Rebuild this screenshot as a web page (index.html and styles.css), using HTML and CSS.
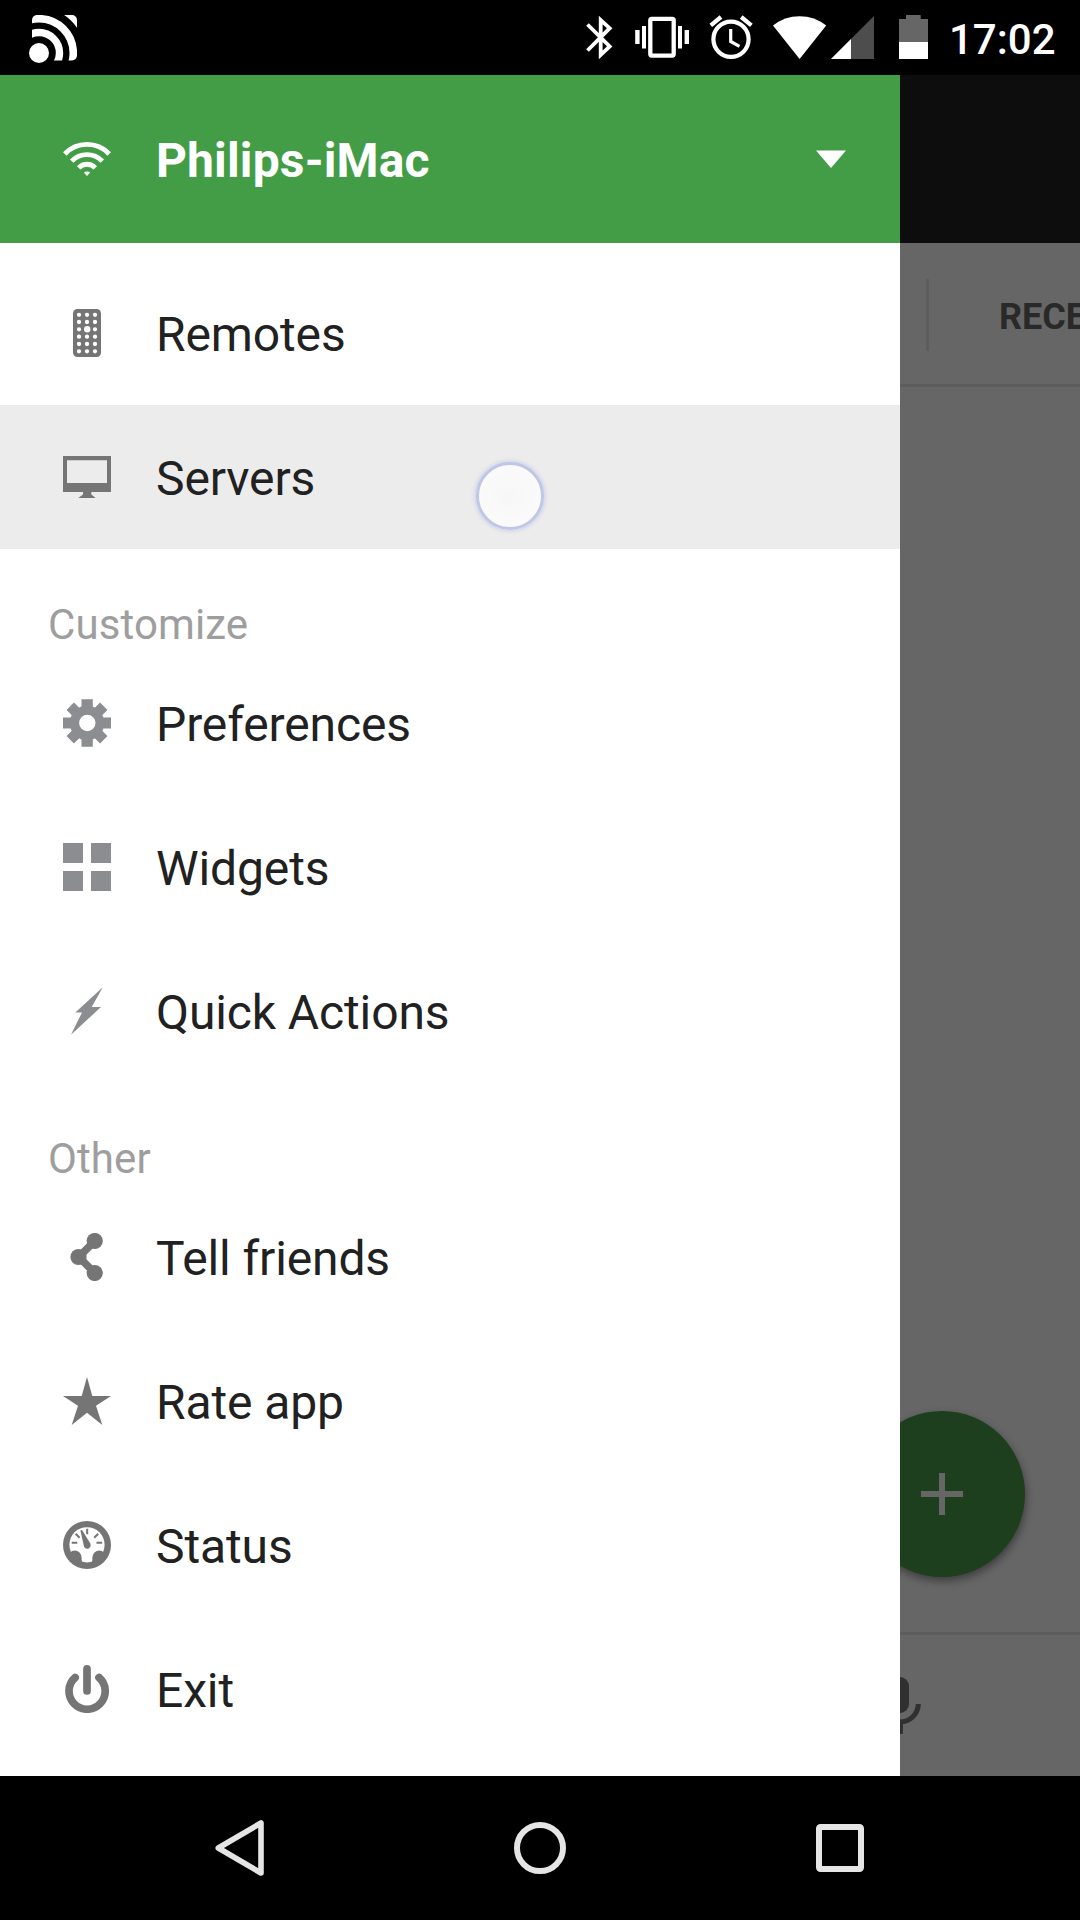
FILE: index.html
```html
<!DOCTYPE html>
<html lang="en">
<head>
    <meta charset="utf-8">
    <title>Remote</title>
    <link rel="stylesheet" href="styles.css">
</head>
<body>

<div class="status-bar">
    <svg class="cast" viewBox="29 0 49 75" width="49" height="75">
        <clipPath id="castClip"><rect x="32" y="15" width="45" height="45.5" rx="5"/></clipPath>
        <circle cx="39" cy="53" r="10" fill="#fff"/>
        <g clip-path="url(#castClip)" fill="none" stroke="#fff">
            <circle cx="39" cy="53" r="20.5" stroke-width="7.4"/>
            <circle cx="39" cy="53" r="34.3" stroke-width="7.6"/>
            <circle cx="39" cy="53" r="53.5" stroke-width="16"/>
        </g>
    </svg>
    <div class="status-icons">
        <svg viewBox="585 0 29 75" width="29" height="75">
            <path d="M587.5 24.5L609.7 46.5L600.7 54.8V20L609.7 28.2L587.5 50.5" fill="none" stroke="#fff" stroke-width="3.8"/>
        </svg>
        <svg viewBox="635 0 54 75" width="54" height="75">
            <rect x="650.3" y="18.8" width="23.4" height="36.8" rx="1.5" fill="none" stroke="#fff" stroke-width="4.3"/>
            <path d="M635.2 30h4.4v14h-4.4zM642 26h4v22.5h-4zM678 26h4v22.5h-4zM684.6 30h4.4v14h-4.4z" fill="#fff"/>
        </svg>
        <svg viewBox="709 0 44 75" width="44" height="75">
            <g fill="none" stroke="#fff">
                <circle cx="731" cy="39.3" r="17.6" stroke-width="4.2"/>
                <path d="M730.7 29V41.5L739.5 46.3" stroke-width="3.2"/>
                <path d="M710.8 25.3L721 17M741.2 17L751.4 25.3" stroke-width="4.2"/>
            </g>
        </svg>
        <svg viewBox="773 0 54 75" width="54" height="75">
            <path d="M773 25.6Q784.5 16.2 799.6 16.2T826.2 25.6L799.6 59z" fill="#fff"/>
        </svg>
        <svg viewBox="831 0 43 75" width="43" height="75">
            <path d="M831 59L874 16V59z" fill="#4d4d4d"/>
            <path d="M831 59L851 39V59z" fill="#fff"/>
        </svg>
        <svg viewBox="899 0 29 75" width="29" height="75">
            <path d="M906 15h14.7v4H928v23h-29V19h7z" fill="#666"/>
            <path d="M899 42h29v17h-29z" fill="#fff"/>
        </svg>
    </div>
    <span class="clock">17:02</span>
</div>

<div class="app">
    <nav class="drawer">
        <div class="drawer-header">
            <svg class="icon" viewBox="0 0 48 48">
                <g fill="none" stroke="#fff" stroke-width="4.8">
                    <path d="M1.8 19A30.5 30.5 0 0 1 46.2 19"/>
                    <path d="M8.7 26.2A21.3 21.3 0 0 1 39.3 26.2"/>
                    <path d="M15.7 32.8A11.5 11.5 0 0 1 32.3 32.8"/>
                </g>
                <path d="M20.8 37.6Q24 35.4 27.2 37.6L24 41z" fill="#fff"/>
            </svg>
            <span class="label">Philips-iMac</span>
            <svg class="caret" viewBox="0 0 30 18"><path d="M0 .5H30L15 18z" fill="#fff"/></svg>
        </div>

        <div class="menu">
            <div class="item">
                <svg class="icon" viewBox="0 0 48 48">
                    <rect x="10" width="28" height="48" rx="4.5" fill="#757575"/>
                    <g fill="none" stroke="#fff" stroke-width="4.3" stroke-linecap="round">
                        <path d="M16 5.8v0M16 13v0M16 20.3v0M16 27.7v0M16 35v0M16 42.3v0"/>
                        <path d="M24 5.8v0M24 13v0M24 27.7v0M24 35v0M24 42.3v0"/>
                        <path d="M32 5.8v0M32 13v0M32 20.3v0M32 27.7v0M32 35v0M32 42.3v0"/>
                    </g>
                    <circle cx="24.2" cy="20.2" r="3.2" fill="#fff"/>
                </svg>
                <span class="label">Remotes</span>
            </div>
            <div class="item active">
                <svg class="icon" viewBox="0 0 48 48">
                    <path d="M0 3H48V39H28.3V41.5L32.7 44.9H15.3L20 41.5V39H0zM4 7.3V30H44V7.3z" fill="#757575" fill-rule="evenodd"/>
                </svg>
                <span class="label">Servers</span>
                <span class="touch"></span>
            </div>

            <div class="section">Customize</div>
            <div class="item">
                <svg class="icon" viewBox="0 0 48 48">
                    <g fill="#8c8d91">
                        <path d="M18.5 .3h11.3v47.4H18.5zM0 18.5h48v11H0z"/>
                        <path d="M18.8 .3h10.4v47.4H18.8zM.3 18.8h47.4v10.4H.3z" transform="rotate(45 24 24)"/>
                        <circle cx="24" cy="24" r="17.3"/>
                    </g>
                    <circle cx="24.3" cy="24" r="8.2" fill="#fff"/>
                </svg>
                <span class="label">Preferences</span>
            </div>
            <div class="item">
                <svg class="icon" viewBox="0 0 48 48">
                    <path d="M0 0h20v20H0zM28 0h20v20H28zM0 28h20v20H0zM28 28h20v20H28z" fill="#8c8d91"/>
                </svg>
                <span class="label">Widgets</span>
            </div>
            <div class="item">
                <svg class="icon" viewBox="0 0 48 48">
                    <path d="M39.8 .2L28.7 19.9H38L8 47.8L19 25.4H12.3z" fill="#8c8d91"/>
                </svg>
                <span class="label">Quick Actions</span>
            </div>

            <div class="section">Other</div>
            <div class="item">
                <svg class="icon" viewBox="0 0 48 48">
                    <path d="M31.7 8L15.7 24L31.7 40" fill="none" stroke="#757575" stroke-width="7.5"/>
                    <path d="M29 14.5Q23 18 23 24T29 33.5L15.7 28V20z" fill="#757575"/>
                    <g fill="#757575">
                        <circle cx="31.7" cy="8" r="8.1"/>
                        <circle cx="15.5" cy="24" r="8.1"/>
                        <circle cx="31.7" cy="40" r="8.1"/>
                    </g>
                </svg>
                <span class="label">Tell friends</span>
            </div>
            <div class="item">
                <svg class="icon" viewBox="0 0 48 48">
                    <path d="M24 0L29.3 19H48L33 28.7L39.3 48L24 35.8L8.7 48L15 28.7L0 19H18.7z" fill="#757575"/>
                </svg>
                <span class="label">Rate app</span>
            </div>
            <div class="item">
                <svg class="icon" viewBox="0 0 48 48">
                    <circle cx="24" cy="24" r="24" fill="#757575"/>
                    <circle cx="24" cy="23.8" r="17.6" fill="#fff"/>
                    <g fill="#757575">
                        <circle cx="11.8" cy="36.2" r="6.6"/>
                        <circle cx="36.2" cy="36.2" r="6.6"/>
                        <path d="M10 36h8.4l.6 6H12zM38 36h-8.4l-.6 6H36z"/>
                        <path d="M17.4 9.6L19 9L27.2 22.3Q28.6 25.6 25.8 27.4Q22.4 28.6 21 25.4z"/>
                    </g>
                    <path d="M8.7 21.8h5.6M33.5 21.8h5.6M24.2 7.8v5.4M12.6 12.7l4 4M35.2 12.7l-4 4" stroke="#757575" stroke-width="2"/>
                </svg>
                <span class="label">Status</span>
            </div>
            <div class="item">
                <svg class="icon" viewBox="0 0 48 48">
                    <path d="M12.2 12.5A18.1 18.1 0 1 0 36 12.5M24 3.9V26" fill="none" stroke="#757575" stroke-width="7.7" stroke-linecap="round"/>
                </svg>
                <span class="label">Exit</span>
            </div>
        </div>
    </nav>

    <main class="page">
        <div class="page-header"></div>
        <div class="tabs">
            <span class="tab-divider"></span>
            <span class="tab">RECE</span>
        </div>
        <div class="page-body">
            <div class="fab">
                <svg viewBox="0 0 42 42" width="42" height="42"><path d="M18 0h6v18h18v6H24v18h-6V24H0v-6h18z" fill="#666"/></svg>
            </div>
        </div>
        <div class="toolbar">
            <svg viewBox="12 0 12 24" width="36" height="72">
                <rect x="9" y="2" width="6" height="12" rx="3" fill="#303030"/>
                <path d="M12 17A6.1 6.1 0 0 0 18.1 11" fill="none" stroke="#303030" stroke-width="1.7"/>
                <rect x="11" y="17" width="2" height="4" fill="#303030"/>
            </svg>
        </div>
    </main>
</div>

<div class="nav-bar">
    <svg viewBox="0 0 60 60" width="60" height="60">
        <path d="M51 5V55L8.3 30z" fill="none" stroke="#e5e5e5" stroke-width="5.6" stroke-linejoin="round"/>
    </svg>
    <svg viewBox="0 0 60 60" width="60" height="60">
        <circle cx="30" cy="30" r="23" fill="none" stroke="#e5e5e5" stroke-width="6"/>
    </svg>
    <svg viewBox="0 0 60 60" width="60" height="60">
        <rect x="9" y="9" width="42" height="42" rx="1.5" fill="none" stroke="#e5e5e5" stroke-width="6"/>
    </svg>
</div>

</body>
</html>
```
FILE: styles.css
```css
body {
    margin: 0;
    width: 1080px;
    height: 1920px;
    background-color: #000;
    font-family: Roboto, "Noto Sans", sans-serif;
    overflow: hidden;
}

svg {
    display: block;
    flex-shrink: 0;
}

.status-bar {
    display: flex;
    height: 75px;
    box-sizing: border-box;
    padding: 0 23px 0 29px;
}

.status-icons {
    display: grid;
    grid-template-columns: 50px 74px 64px 58px 68px 29px;
    margin-left: auto;
}

.clock {
    width: 108px;
    margin-left: 21px;
    font-size: 42px;
    font-weight: 500;
    line-height: 79px;
    color: #fff;
}

.app {
    display: flex;
    height: 1701px;
}

.drawer {
    width: 900px;
    background-color: #fff;
}

.drawer-header,
.item {
    display: flex;
    align-items: center;
    box-sizing: border-box;
    padding: 0 54px 0 63px;
    font-size: 48px;
}

.drawer-header {
    height: 168px;
    background-color: #439d46;
    color: #fff;
    font-weight: bold;
    letter-spacing: 0.15px;
}

.icon {
    width: 48px;
    height: 48px;
    margin-right: 45px;
}

.label {
    padding-top: 3px;
}

.caret {
    width: 30px;
    height: 18px;
    margin-left: auto;
}

.menu {
    padding-top: 18px;
}

.item {
    position: relative;
    height: 144px;
    color: #212121;
    letter-spacing: -0.12px;
}

.item.active {
    background-color: #ececec;
}

.section {
    height: 102px;
    box-sizing: border-box;
    padding: 51px 0 0 48px;
    font-size: 42px;
    line-height: 49px;
    letter-spacing: 0.1px;
    color: #9e9e9e;
}

/* finger indicator over the pressed row */
.touch {
    position: absolute;
    left: 476px;
    top: 57px;
    width: 68px;
    height: 68px;
    box-sizing: border-box;
    border: 3px solid #bfc6e6;
    border-radius: 50%;
    background: radial-gradient(#f7f7f7, #fcfcfd);
    box-shadow: 0 0 4px 1px #c8cdea;
}

/* page behind the drawer, dimmed */
.page {
    display: flex;
    flex-direction: column;
    width: 180px;
    background-color: #666;
    overflow: hidden;
}

.page-header {
    height: 168px;
    background-color: #0d0d0d;
}

.tabs {
    display: flex;
    align-items: center;
    height: 141px;
    border-bottom: 3px solid #5c5c5c;
}

.tab-divider {
    width: 3px;
    height: 72px;
    margin: 3px 70px 0 26px;
    flex-shrink: 0;
    background-color: #5c5c5c;
}

.tab {
    padding-top: 6px;
    font-size: 36px;
    font-weight: bold;
    color: #292929;
}

.page-body {
    position: relative;
    flex: 1;
    overflow: hidden;
}

.fab {
    position: absolute;
    left: -41px;
    bottom: 55px;
    width: 166px;
    height: 166px;
    display: flex;
    align-items: center;
    justify-content: center;
    border-radius: 50%;
    background-color: #1d3f1e;
    box-shadow: 1px 4px 9px rgba(0, 0, 0, 0.4);
}

.toolbar {
    display: flex;
    align-items: center;
    box-sizing: border-box;
    height: 144px;
    border-top: 3px solid #5c5c5c;
    padding-top: 2px;
}

.nav-bar {
    display: flex;
    align-items: center;
    justify-content: center;
    gap: 240px;
    height: 144px;
}
```
